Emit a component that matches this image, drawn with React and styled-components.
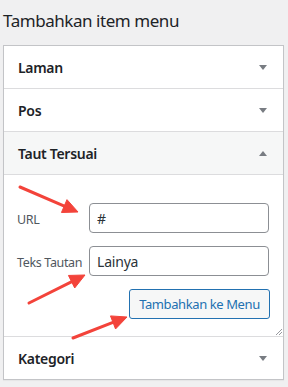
import styled, { createGlobalStyle } from "styled-components";

const GlobalStyle = createGlobalStyle`
  html, body {
    margin: 0;
    padding: 0;
    background: #f0f0f1;
  }
  body {
    font-family: "Noto Sans", "Open Sans", sans-serif;
    color: #1d2327;
  }
`;

const arrows = [
  { from: [20, 187], to: [78, 212] },
  { from: [29, 303], to: [85, 275] },
  { from: [73, 338], to: [127, 317] },
];

const arrowHead = ({ from, to }) => {
  const dx = to[0] - from[0];
  const dy = to[1] - from[1];
  const len = Math.hypot(dx, dy);
  const ux = dx / len;
  const uy = dy / len;
  const bx = to[0] - ux * 15;
  const by = to[1] - uy * 15;
  const px = -uy * 7;
  const py = ux * 7;
  return {
    line: [from[0], from[1], bx + ux * 2, by + uy * 2],
    head: `${to[0]},${to[1]} ${bx + px},${by + py} ${bx - px},${by - py}`,
  };
};

const App = () => {
  return (
    <>
      <GlobalStyle />
      <Page>
        <Title>Tambahkan item menu</Title>
        <Panel>
          <Header>
            <HeaderText>Laman</HeaderText>
            <Caret />
          </Header>
          <Header>
            <HeaderText>Pos</HeaderText>
            <Caret />
          </Header>
          <Header open>
            <HeaderText>Taut Tersuai</HeaderText>
            <Caret open />
          </Header>
          <Content>
            <Field>
              <Label>URL</Label>
              <Input defaultValue="#" />
            </Field>
            <Field>
              <Label>Teks Tautan</Label>
              <Input defaultValue="Lainya" />
            </Field>
            <Actions>
              <Button>Tambahkan ke Menu</Button>
            </Actions>
            <Resize viewBox="0 0 7 7" width="7" height="7">
              <line x1="1" y1="7" x2="7" y2="1" stroke="#8c8f94" strokeWidth="0.9" />
              <line x1="4" y1="7" x2="7" y2="4" stroke="#8c8f94" strokeWidth="0.9" />
            </Resize>
          </Content>
          <Header last>
            <HeaderText>Kategori</HeaderText>
            <Caret />
          </Header>
        </Panel>
        <Overlay width="288" height="387" viewBox="0 0 288 387">
          {arrows.map((a, i) => {
            const { line, head } = arrowHead(a);
            return (
              <g key={i} fill="#f3433a" stroke="#f3433a">
                <line x1={line[0]} y1={line[1]} x2={line[2]} y2={line[3]} strokeWidth="3" strokeLinecap="round" />
                <polygon points={head} strokeWidth="1" strokeLinejoin="round" />
              </g>
            );
          })}
        </Overlay>
      </Page>
    </>
  );
};

export default App;

const Page = styled.div`
  position: relative;
  width: 288px;
  height: 387px;
  padding: 0 4px 0 3px;
  box-sizing: border-box;
  overflow: hidden;
`;

const Title = styled.h2`
  margin: 0;
  padding: 9px 0 0 0;
  height: 45px;
  box-sizing: border-box;
  font-size: 17px;
  font-weight: 400;
  color: #1d2327;
  letter-spacing: -0.45px;
`;

const Panel = styled.div`
  background: #fff;
  border: 1px solid #c3c4c7;
  box-shadow: 0 1px 1px rgba(0, 0, 0, 0.04);
`;

const Header = styled.div`
  height: 42px;
  display: flex;
  align-items: center;
  justify-content: space-between;
  padding: 0 16px 0 14px;
  border-bottom: ${({ last }) => (last ? "none" : "1px solid #dcdcde")};
  background: ${({ open }) => (open ? "#f6f7f7" : "#fff")};
`;

const HeaderText = styled.span`
  font-size: 14px;
  font-weight: 600;
  color: #1d2327;
  letter-spacing: -0.3px;
`;

const Caret = styled.i`
  width: 0;
  height: 0;
  border-left: 4px solid transparent;
  border-right: 4px solid transparent;
  ${({ open }) =>
    open ? "border-bottom: 5px solid #787c82;" : "border-top: 5px solid #787c82;"}
`;

const Content = styled.div`
  position: relative;
  padding: 28px 14px 17px 13px;
  border-bottom: 1px solid #dcdcde;
  display: flex;
  flex-direction: column;
  gap: 13px;
`;

const Field = styled.div`
  display: flex;
  align-items: center;
`;

const Label = styled.label`
  width: 72px;
  flex: none;
  font-size: 12.5px;
  color: #50575e;
  letter-spacing: -0.35px;
  padding-top: 3px;
  white-space: nowrap;
`;

const Input = styled.input`
  width: 180px;
  height: 30px;
  box-sizing: border-box;
  border: 1px solid #8c8f94;
  border-radius: 4px;
  padding: 0 7px;
  font-family: inherit;
  font-size: 14px;
  letter-spacing: -0.2px;
  color: #2c3338;
  background: #fff;
  outline: none;
`;

const Actions = styled.div`
  display: flex;
  justify-content: flex-end;
  margin-right: -1px;
`;

const Button = styled.button`
  height: 30px;
  width: 141px;
  box-sizing: border-box;
  border: 1px solid #2271b1;
  border-radius: 3px;
  background: #f6f7f7;
  color: #2271b1;
  font-family: inherit;
  font-size: 13px;
  letter-spacing: -0.4px;
  padding: 0;
  cursor: pointer;
`;

const Resize = styled.svg`
  position: absolute;
  right: 1px;
  bottom: 1px;
`;

const Overlay = styled.svg`
  position: absolute;
  left: 0;
  top: 0;
  pointer-events: none;
`;
